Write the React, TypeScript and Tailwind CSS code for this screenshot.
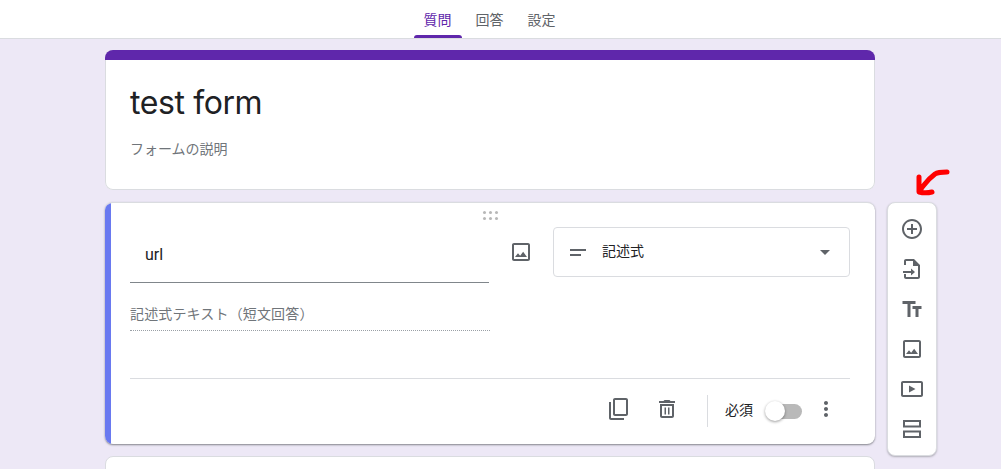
const jp = "font-['Roboto','Noto_Sans_CJK_JP',sans-serif]";

function Icon({ d, className = "" }: { d: string; className?: string }) {
  return (
    <svg viewBox="0 0 24 24" className={`h-6 w-6 shrink-0 fill-[#5f6368] ${className}`}>
      <path d={d} />
    </svg>
  );
}

const icons = {
  add: "M13 7h-2v4H7v2h4v4h2v-4h4v-2h-4V7zm-1-5C6.48 2 2 6.48 2 12s4.48 10 10 10 10-4.48 10-10S17.52 2 12 2zm0 18c-4.41 0-8-3.59-8-8s3.59-8 8-8 8 3.59 8 8-3.59 8-8 8z",
  importFile:
    "M14 2H6c-1.1 0-2 .9-2 2v4h2V4h7v5h5v11H6v-3H4v3c0 1.1.9 2 2 2h12c1.1 0 2-.9 2-2V8l-6-6zM11 11.5V14H3v2h8v2.5l4-3.5-4-3.5z",
  title: "M2.5 4v3h5v13h3V7h5V4h-13zm19 5h-9v3h3v8h3v-8h3V9z",
  image:
    "M19 5v14H5V5h14m0-2H5c-1.1 0-2 .9-2 2v14c0 1.1.9 2 2 2h14c1.1 0 2-.9 2-2V5c0-1.1-.9-2-2-2zm-4.86 8.86l-3 3.87L9 13.14 6 17h12l-3.86-5.14z",
  video:
    "M21 4H3c-1.1 0-2 .9-2 2v12c0 1.1.9 2 2 2h18c1.1 0 2-.9 2-2V6c0-1.1-.9-2-2-2zm0 14H3V6h18v12zM9 8.5v7l6.5-3.5L9 8.5z",
  section: "M3 3h18v7.5H3zM5 5v3.5h14V5zM3 13.5h18V21H3zM5 15.5V19h14v-3.5z",
  copy: "M20 1H9c-1.1 0-2 .9-2 2v14c0 1.1.9 2 2 2h11c1.1 0 2-.9 2-2V3c0-1.1-.9-2-2-2zm0 16H9V3h11v14zM5 5H3v16c0 1.1.9 2 2 2h13v-2H5V5z",
  trash:
    "M5 19c0 1.1.9 2 2 2h10c1.1 0 2-.9 2-2V7H5v12zM7 9h10v10H7V9zm2.5 1.5H11v7H9.5v-7zm3.5 0h1.5v7H13v-7zM15.5 4l-1-1h-5l-1 1H4v2h16V4z",
  more: "M12 8c1.1 0 2-.9 2-2s-.9-2-2-2-2 .9-2 2 .9 2 2 2zm0 2c-1.1 0-2 .9-2 2s.9 2 2 2 2-.9 2-2-.9-2-2-2zm0 6c-1.1 0-2 .9-2 2s.9 2 2 2 2-.9 2-2-.9-2-2-2z",
};

function DragDots() {
  return (
    <div className="grid grid-cols-3 gap-[3px]">
      {[0, 1, 2, 3, 4, 5].map((i) => (
        <span key={i} className="h-[3px] w-[3px] rounded-full bg-[#b8b8b8]" />
      ))}
    </div>
  );
}

function Sidebar() {
  return (
    <aside className="relative flex h-[254px] w-[50px] shrink-0 flex-col items-center rounded-lg border border-[#dadce0] bg-white pt-[6px] shadow-[0_1px_2px_rgba(60,64,67,0.35)]">
      {[icons.add, icons.importFile, icons.title, icons.image, icons.video, icons.section].map((d) => (
        <div key={d} className="flex h-10 w-10 items-center justify-center">
          <Icon d={d} />
        </div>
      ))}
      {/* Red hand drawn arrow */}
      <svg
        viewBox="0 0 40 30"
        className="absolute left-[23px] top-[-36px] h-[30px] w-[40px] fill-none stroke-[#ff0000]"
      >
        <path
          d="M36 5C31 5 27 5 24 7C20 10 16 14 13 18C11 20 10 22 9 24M8 10C8 15 8 20 8 25C12 26 17 26 21 25"
          strokeWidth="5"
          strokeLinecap="round"
          strokeLinejoin="round"
        />
      </svg>
    </aside>
  );
}

export default function App() {
  return (
    <div className={`flex h-[469px] flex-col overflow-hidden bg-[#ede8f6] ${jp}`}>
      <header className="flex h-[39px] shrink-0 justify-center gap-1 border-b border-[#dadce0] bg-white pr-[22px]">
        <div className="relative flex w-12 items-center justify-center pt-[2px] text-[14px] text-[#5f27ab]">
          質問
          <span className="absolute bottom-0 left-0 right-0 h-[3px] rounded-t-[3px] bg-[#5f27ab]" />
        </div>
        <div className="flex w-12 items-center justify-center pt-[2px] text-[14px] text-[#5f6368]">回答</div>
        <div className="flex w-12 items-center justify-center pt-[2px] text-[14px] text-[#5f6368]">設定</div>
      </header>

      <main className="flex gap-3 pl-[105px] pt-[11px]">
        <div className="flex w-[770px] shrink-0 flex-col">
          {/* Title card */}
          <section className="h-[140px] overflow-hidden rounded-lg bg-white shadow-[inset_0_0_0_1px_#dadce0]">
            <div className="h-[10px] bg-[#5f27ab]" />
            <h1 className="mt-[21px] pl-[25px] text-[32px] leading-[44px] tracking-[-0.4px] text-[#202124] font-['Inter','Roboto',sans-serif]">
              test form
            </h1>
            <p className="mt-[14px] pl-[25px] text-[14px] leading-[20px] text-[#70757a]">フォームの説明</p>
          </section>

          {/* Question card */}
          <section className="mt-3 flex h-[242px] overflow-hidden rounded-lg border-t border-[#dadce0] bg-white shadow-[0_1px_2px_rgba(60,64,67,0.6)]">
            <div className="w-[6px] shrink-0 bg-[#6979f0]" />
            <div className="flex-1 pl-[19px] pr-[25px]">
              <div className="flex h-[24px] items-center justify-center">
                <DragDots />
              </div>
              <div className="flex h-[56px] items-start">
                <div className="flex h-[56px] w-[359px] items-center border-b border-[#80868b] pl-[15px] pt-[1px] text-[16px] text-[#202124]">
                  url
                </div>
                <div className="flex h-[50px] w-[64px] items-center justify-center">
                  <Icon d={icons.image} />
                </div>
                <div className="flex h-[50px] w-[297px] items-center rounded border border-[#dadce0] pl-[16px] pr-[19px]">
                  <svg viewBox="0 0 16 7" className="h-[7px] w-[16px] fill-[#5f6368]">
                    <rect width="16" height="2" />
                    <rect y="5" width="11" height="2" />
                  </svg>
                  <span className="mb-[2px] ml-[16px] flex-1 text-[14px] text-[#202124]">記述式</span>
                  <svg viewBox="0 0 10 5" className="h-[5px] w-[10px] fill-[#5f6368]">
                    <path d="M0 0h10L5 5z" />
                  </svg>
                </div>
              </div>
              <div className="mt-[20px] h-[28px] w-[360px] border-b border-dotted border-[#9aa0a6] text-[14px] leading-[22px] tracking-[0.15px] text-[#70757a]">
                記述式テキスト（短文回答）
              </div>
              <div className="mt-[47px] flex items-center justify-end border-t border-[#dadce0] pr-[12px] pt-[16px]">
                <Icon d={icons.copy} className="mb-1 mr-[25px]" />
                <Icon d={icons.trash} className="mb-1 mr-[28px]" />
                <div className="mr-[17px] h-[32px] w-px bg-[#dadce0]" />
                <span className="mb-[2px] mr-[11px] text-[14px] text-[#202124]">必須</span>
                <div className="relative mr-[12px] h-[15px] w-[38px]">
                  <div className="absolute bottom-0 right-0 top-0 w-[34px] rounded-full bg-[#b9b9b9]" />
                  <div className="absolute left-[1px] top-[-3px] h-[20px] w-[20px] rounded-full bg-white shadow-[0_1px_3px_rgba(0,0,0,0.4)]" />
                </div>
                <Icon d={icons.more} className="mb-1" />
              </div>
            </div>
          </section>

          {/* Next card, cut off by the window */}
          <section className="mt-3 h-[60px] shrink-0 rounded-lg border border-[#dadce0] bg-white" />
        </div>

        <div className="pt-[152px]">
          <Sidebar />
        </div>
      </main>
    </div>
  );
}
